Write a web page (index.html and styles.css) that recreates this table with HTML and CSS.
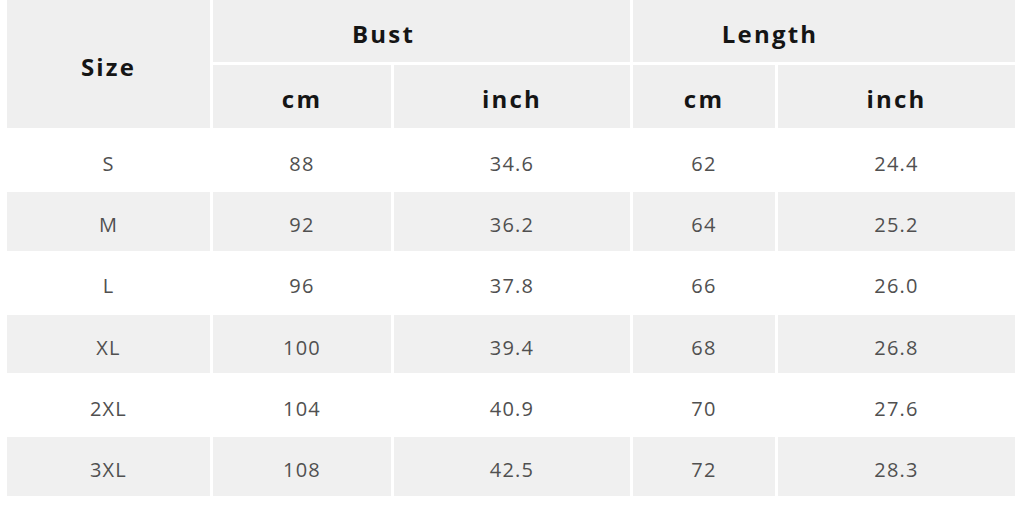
FILE: index.html
```html
<!DOCTYPE html>
<html>
<head>
<meta charset="utf-8">
<link rel="stylesheet" href="styles.css">
</head>
<body>
<div class="chart">
  <div class="cell head size">Size</div>
  <div class="cell head bust">Bust</div>
  <div class="cell head length">Length</div>
  <div class="cell head">cm</div>
  <div class="cell head">inch</div>
  <div class="cell head">cm</div>
  <div class="cell head">inch</div>

  <div class="cell">S</div><div class="cell">88</div><div class="cell">34.6</div><div class="cell">62</div><div class="cell">24.4</div>
  <div class="cell g">M</div><div class="cell g">92</div><div class="cell g">36.2</div><div class="cell g">64</div><div class="cell g">25.2</div>
  <div class="cell">L</div><div class="cell">96</div><div class="cell">37.8</div><div class="cell">66</div><div class="cell">26.0</div>
  <div class="cell g">XL</div><div class="cell g">100</div><div class="cell g">39.4</div><div class="cell g">68</div><div class="cell g">26.8</div>
  <div class="cell">2XL</div><div class="cell">104</div><div class="cell">40.9</div><div class="cell">70</div><div class="cell">27.6</div>
  <div class="cell g">3XL</div><div class="cell g">108</div><div class="cell g">42.5</div><div class="cell g">72</div><div class="cell g">28.3</div>
</div>
</body>
</html>
```
FILE: styles.css
```css
html, body {
  margin: 0;
  padding: 0;
  background: #ffffff;
}
body {
  padding: 0 0 0 7px;
  font-family: "Open Sans", "Noto Sans", sans-serif;
}
.chart {
  display: grid;
  grid-template-columns: 203px 178px 236px 142px 237px;
  grid-template-rows: 62px 63px repeat(6, 58.3px);
  gap: 3px;
  width: 1008px;
}
.cell {
  display: flex;
  align-items: center;
  justify-content: center;
  font-size: 20px;
  letter-spacing: 1.2px;
  color: #505050;
  background: #ffffff;
  padding-top: 6px;
  box-sizing: border-box;
}
.cell.g {
  background: #f0f0f0;
}
.cell.head {
  background: #efefef;
  color: #151515;
  font-weight: 700;
  font-size: 24px;
  letter-spacing: 2.2px;
  padding-top: 4px;
}
.cell.size {
  grid-row: 1 / span 2;
}
.cell.bust {
  grid-column: 2 / span 2;
  padding-right: 76px;
}
.cell.length {
  grid-column: 4 / span 2;
  padding-right: 108px;
}
```
